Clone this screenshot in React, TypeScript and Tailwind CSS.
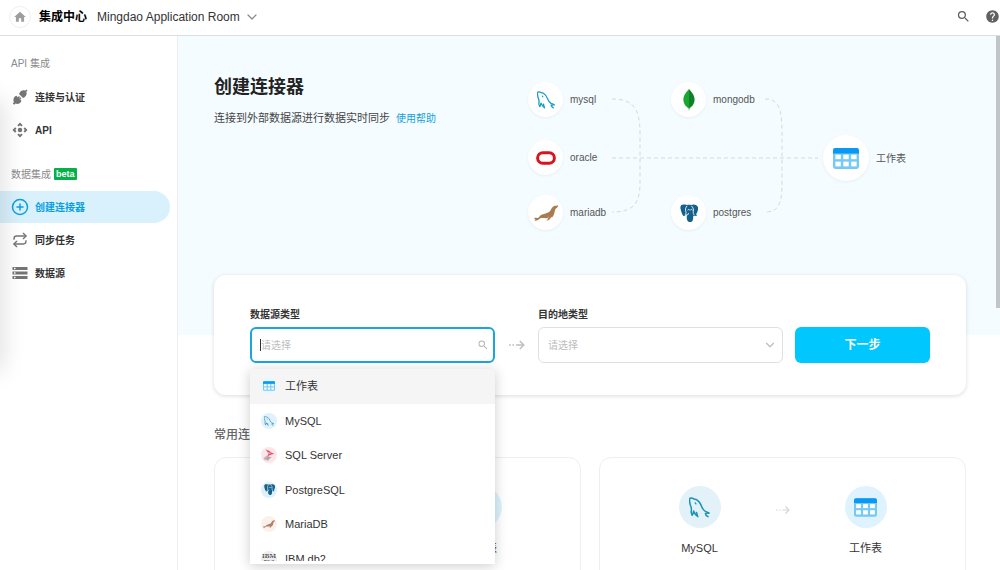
import type { ReactNode } from 'react'
import { MdControlCamera, MdHelp, MdHome, MdSearch, MdStorage } from 'react-icons/md'
import { SiMariadb } from 'react-icons/si'
import { ChevronDown, CirclePlus, Repeat } from 'lucide-react'

interface NavItem {
  label: string
  icon: ReactNode
  active?: boolean
}

interface SourceOption {
  label: string
  icon: ReactNode
  tint: string
}

interface DiagramNode {
  label: string
  icon: ReactNode
  position: string
  large?: boolean
}

function TableIcon({ className }: { className: string }) {
  return (
    <svg viewBox="0 0 26 21" className={className} aria-hidden="true">
      <rect width="26" height="21" rx="2.4" fill="#74c9f5" />
      <path d="M0 5.4V2.4A2.4 2.4 0 0 1 2.4 0h21.2A2.4 2.4 0 0 1 26 2.4v3z" fill="#0a99f2" />
      <g fill="#fff">
        <rect x="2.4" y="6.6" width="5.4" height="4.6" />
        <rect x="10.3" y="6.6" width="5.4" height="4.6" />
        <rect x="18.2" y="6.6" width="5.4" height="4.6" />
        <rect x="2.4" y="13.6" width="5.4" height="4.8" />
        <rect x="10.3" y="13.6" width="5.4" height="4.8" />
        <rect x="18.2" y="13.6" width="5.4" height="4.8" />
      </g>
    </svg>
  )
}

function DolphinIcon({ className }: { className: string }) {
  return (
    <svg
      viewBox="0 0 64 64"
      className={className}
      fill="none"
      stroke="currentColor"
      strokeWidth="4.6"
      strokeLinecap="round"
      strokeLinejoin="round"
      aria-hidden="true"
    >
      <path d="M10 55c-3-4-4-8-3-13 1-6 0-11-2-15C3 21 1 12 2 6c1-5 8-3 13 0 3 1 6 1 9 3 8 5 12 13 15 21 3 7 6 11 11 14 4 2 8 3 11 5" />
      <path d="M10 55c2-3 3-7 4-12 3 7 6 13 13 17-2-5-3-9-4-13" />
      <path d="M60 49c-4 0-8 0-10 1 0 4 3 7 8 10" />
      <path d="M19 18l2 3" strokeWidth="4" />
    </svg>
  )
}

function ElephantIcon({ className }: { className: string }) {
  return (
    <svg viewBox="0 0 34 34" className={className} aria-hidden="true">
      <path
        d="M7 1C2 1 0 4 1 9c1 5 3 11 5 13 2 2 4 0 5-2l2 1c0 4-1 7 1 10 2 4 8 4 10 0 1-3 1-6 1-9 3 1 6 1 8-1l-3-1c3-4 5-10 4-14-2-5-8-6-13-4-3-1-6-1-8 0-2-1-4-1-6-1z"
        fill="#14618c"
      />
      <g fill="none" stroke="#fff" strokeWidth="1.7" strokeLinecap="round">
        <path d="M13 4c-3 3-3 7-2 10 1 3 0 5-1 6" />
        <path d="M22 4c3 3 4 6 3 10 0 3 0 5 2 7" />
        <path d="M15 11c1-1 3-1 3 0M20 11c1-1 2-1 3 0" />
        <path d="M13 20c2 1 3 0 3-2" />
      </g>
    </svg>
  )
}

function SqlServerIcon({ className }: { className: string }) {
  return (
    <svg viewBox="0 0 24 24" className={className} aria-hidden="true">
      <path d="M5 1c4 1 9 3 13 7 2 1 4 1 5 2-6 0-10 2-14 5 1-3 2-5 1-7C9 5 7 3 5 1z" fill="#e2445c" />
      <path d="M10 6l8 2-8 3z" fill="#f4a0ac" />
      <path d="M9 13c-4 1-7 3-8 6 0 3 5 4 9 4l8-7c-3 0-6-1-9-3z" fill="#c9bcc4" />
      <path d="M4 19c3 1 6 1 9 0M7 16c3 1 5 1 8 1M9 13l1 10" stroke="#9c8c96" strokeWidth="1" fill="none" />
    </svg>
  )
}

function OracleIcon() {
  return (
    <svg viewBox="0 0 20 14" className="h-3.5 w-5" aria-hidden="true">
      <rect x="1.6" y="1.8" width="16.8" height="10.4" rx="5.2" fill="none" stroke="#d9151c" strokeWidth="3" />
    </svg>
  )
}

function LeafIcon() {
  return (
    <svg viewBox="0 0 12 22" className="h-[22px] w-3" aria-hidden="true">
      <path d="M6 0C8.500 3 11.600 6 11.600 10.500 11.600 15 9 17.700 6.500 19.200L6 22z" fill="#12802a" />
      <path d="M6 0C3.500 3 .4 6 .4 10.500.4 15 3 17.700 5.500 19.200L6 22z" fill="#17a92f" />
    </svg>
  )
}

function PlugIcon() {
  return (
    <svg viewBox="0 0 24 24" className="size-4" fill="currentColor" aria-hidden="true">
      <path d="M10.500 7.500l6 6 2.300-1.200c2.900-1.800 3.800-5 2.700-8L23.300 2.500 21.500.7l-1.800 1.800c-3-1.100-6.200-.2-8 2.700z" />
      <path d="M4.300 11.200l2.200-1.200 2.200 2.200 1.800-1.800 1.500 1.500-1.800 1.800 0.600 0.600 1.800-1.800 1.500 1.500-1.800 1.800 1.900 1.900-1.200 2.300c-1.800 2.500-5 3-7.800 1.800L3.400 23.500 1.200 21.700l1.700-2c-1.300-3-1-6.300 1.400-8.500z" />
    </svg>
  )
}

function IbmIcon() {
  return (
    <svg viewBox="0 0 16 16" className="size-4" aria-hidden="true">
      <g fill="#4b4b4b" fontFamily="Liberation Serif, serif" fontWeight="700" textAnchor="middle">
        <text x="8" y="7" fontSize="7">IBM</text>
        <text x="8" y="13" fontSize="6">Db2</text>
      </g>
      <path d="M1 4.500h14" stroke="#ededed" strokeWidth=".4" />
    </svg>
  )
}

function DottedArrow({ className }: { className: string }) {
  return (
    <svg viewBox="0 0 16 10" className={className} fill="none" stroke="currentColor" strokeWidth="1.4" aria-hidden="true">
      <path d="M0 5h1.700M3.400 5h1.700M7 5h8" />
      <path d="M10.800 1l4 4-4 4" />
    </svg>
  )
}

const apiNav: NavItem[] = [
  { label: '连接与认证', icon: <PlugIcon /> },
  { label: 'API', icon: <MdControlCamera className="size-[18px] shrink-0" /> },
]

const dataNav: NavItem[] = [
  { label: '创建连接器', icon: <CirclePlus className="size-[18px] shrink-0" />, active: true },
  { label: '同步任务', icon: <Repeat className="size-4" /> },
  { label: '数据源', icon: <MdStorage className="size-[18px] shrink-0" /> },
]

const options: SourceOption[] = [
  { label: '工作表', icon: <TableIcon className="h-2.5 w-3" />, tint: 'bg-[#e6f7ff]' },
  { label: 'MySQL', icon: <DolphinIcon className="size-2.5 text-[#2f8fb0]" />, tint: 'bg-[#dff2fb]' },
  { label: 'SQL Server', icon: <SqlServerIcon className="size-3" />, tint: 'bg-[#fde6ea]' },
  { label: 'PostgreSQL', icon: <ElephantIcon className="size-[11px]" />, tint: 'bg-[#dff0fb]' },
  { label: 'MariaDB', icon: <SiMariadb className="size-3 text-[#a9806a]" />, tint: 'bg-[#fbf0ec]' },
  { label: 'IBM db2', icon: <IbmIcon />, tint: 'bg-[#ededed]' },
]

const nodes: DiagramNode[] = [
  { label: 'mysql', icon: <DolphinIcon className="size-[18px] text-[#1b9cc4]" />, position: 'left-0 top-[8px]' },
  { label: 'oracle', icon: <OracleIcon />, position: 'left-0 top-[66px]' },
  { label: 'mariadb', icon: <SiMariadb className="size-6 text-[#a87c50]" />, position: 'left-0 top-[121px]' },
  { label: 'mongodb', icon: <LeafIcon />, position: 'left-[143px] top-[8px]' },
  { label: 'postgres', icon: <ElephantIcon className="size-[18px]" />, position: 'left-[143px] top-[121px]' },
  { label: '工作表', icon: <TableIcon className="h-[21px] w-[26px]" />, position: 'left-[295px] top-[61px]', large: true },
]

function NavSection({ items }: { items: NavItem[] }) {
  return (
    <ul className="mt-[7px] flex flex-col gap-px">
      {items.map((item) => (
        <li key={item.label}>
          <a
            href="#"
            className={`mr-[7px] flex h-8 items-center gap-[7px] rounded-r-full pl-3 font-bold ${
              item.active ? 'bg-[#d9f1fd] text-[#0c9fe0]' : 'text-[#333]'
            }`}
          >
            <span className={`flex w-4 justify-center ${item.active ? 'text-[#0c9fe0]' : 'text-[#757575]'}`}>{item.icon}</span>
            {item.label}
          </a>
        </li>
      ))}
    </ul>
  )
}

function Header() {
  return (
    <header className="relative z-20 flex h-9 shrink-0 items-center border-b border-[#dcdfe0] bg-white pb-0.5 pl-[9px] text-xs">
      <button aria-label="Home" className="flex size-[22px] items-center justify-center rounded-full border border-[#f0f0f0] text-[#9e9e9e]">
        <MdHome className="size-3.5" />
      </button>
      <h1 className="ml-2 font-bold text-black">集成中心</h1>
      <button className="ml-[10px] flex items-center gap-1 text-[#333]">
        Mingdao Application Room
        <ChevronDown className="size-4 text-[#888]" strokeWidth={1.8} />
      </button>
      <div className="ml-auto flex gap-[14px] text-[#616161]">
        <button aria-label="Search">
          <MdSearch className="size-[15px]" />
        </button>
        <button aria-label="Help">
          <MdHelp className="size-[15px]" />
        </button>
      </div>
    </header>
  )
}

function Sidebar() {
  return (
    <nav className="relative w-[178px] shrink-0 border-r border-[#eceff1] bg-white pt-[18px]">
      <h2 className="h-5 pl-[11px] leading-5 text-[#8a8a8a]">API 集成</h2>
      <NavSection items={apiNav} />
      <h2 className="mt-[18px] flex h-5 items-center gap-[3px] pl-[11px] text-[#8a8a8a]">
        数据集成
        <span className="rounded-[1px] bg-[#05b048] px-0.5 text-[9px] leading-3 font-bold text-white">beta</span>
      </h2>
      <NavSection items={dataNav} />
      <div className="absolute top-16 -left-4 h-[270px] w-4 shadow-[0_0_24px_rgba(0,0,0,0.18)]" />
    </nav>
  )
}

function Diagram() {
  return (
    <div className="relative mr-14 h-40 w-[382px] shrink-0 text-[#555]">
      <svg viewBox="0 0 382 160" className="absolute inset-0" fill="none" stroke="#d3dadd" strokeWidth="1" strokeDasharray="4 3" aria-hidden="true">
        <path d="M84 25c20 0 28 8 28 34v50c0 22-8 29-28 29" />
        <path d="M237 25c13 0 17 8 17 34v50c0 22-4 29-17 29" />
        <path d="M84 84h206" />
      </svg>
      {nodes.map((node) => (
        <div key={node.label} className={`absolute flex items-center gap-[7px] ${node.position}`}>
          <span
            className={`flex items-center justify-center rounded-full bg-white shadow-[0_1px_3px_rgba(0,0,0,0.06)] ${
              node.large ? 'size-[46px]' : 'size-[35px]'
            }`}
          >
            {node.icon}
          </span>
          {node.label}
        </div>
      ))}
    </div>
  )
}

function SourceSelect() {
  return (
    <div className="relative flex-1">
      <label htmlFor="source" className="block leading-4 font-bold text-[#333]">
        数据源类型
      </label>
      <div className="mt-1 flex h-9 items-center rounded-md border-2 border-[#1ba5dc] bg-white pr-1 pl-2">
        <span className="h-3 w-px bg-[#333]" />
        <input
          id="source"
          role="combobox"
          aria-expanded="true"
          aria-controls="source-options"
          placeholder="请选择"
          className="min-w-0 flex-1 outline-none placeholder:text-[#bdbdbd]"
        />
        <MdSearch className="size-3 text-[#b5b5b5]" />
      </div>
      <div className="absolute inset-x-0 top-[62px] z-10 bg-white pb-[3px] shadow-[0_2px_12px_rgba(0,0,0,0.2)]">
        <div className="h-48 overflow-hidden">
          <ul id="source-options" role="listbox" className="grid h-[207px] auto-rows-fr text-[11px] text-[#333]">
            {options.map((option, i) => (
              <li
                key={option.label}
                role="option"
                aria-selected={i === 0}
                className={`flex items-center gap-2 pl-[11px] ${i === 0 ? 'bg-[#f5f5f5]' : ''}`}
              >
                <span className={`flex size-4 items-center justify-center rounded-full ${option.tint}`}>{option.icon}</span>
                {option.label}
              </li>
            ))}
          </ul>
        </div>
      </div>
    </div>
  )
}

function ConnectorForm() {
  return (
    <form className="-mt-15 flex items-end rounded-xl bg-white px-9 py-8 shadow-[0_1px_4px_rgba(0,0,0,0.14)]">
      <SourceSelect />
      <div className="flex h-9 w-[43px] items-center justify-center">
        <DottedArrow className="h-2.5 w-4 text-[#bdbdbd]" />
      </div>
      <div className="flex-1">
        <label htmlFor="target" className="block leading-4 font-bold text-[#333]">
          目的地类型
        </label>
        <div className="relative mt-1">
          <select
            id="target"
            defaultValue=""
            className="block h-9 w-full appearance-none rounded-md border border-[#e0e0e0] bg-white px-[9px] text-[#bdbdbd]"
          >
            <option value="">请选择</option>
          </select>
          <ChevronDown className="pointer-events-none absolute top-[11px] right-1.5 size-3.5 text-[#bdbdbd]" />
        </div>
      </div>
      <button type="button" className="ml-3 h-9 w-[135px] rounded-md bg-[#00c8ff] text-xs font-bold text-white">
        下一步
      </button>
    </form>
  )
}

function PresetEnd({ label, tint, children }: { label: string; tint: string; children: ReactNode }) {
  return (
    <div className="flex w-16 flex-col items-center gap-3">
      <span className={`flex size-[42px] items-center justify-center rounded-full ${tint}`}>{children}</span>
      <span className="leading-4">{label}</span>
    </div>
  )
}

function PresetCard({ source, tint, icon }: { source: string; tint: string; icon: ReactNode }) {
  return (
    <div className="flex justify-center gap-11 rounded-xl border border-[#efefef] bg-white pt-7 pb-10 text-[11px] text-[#333]">
      <PresetEnd label={source} tint={tint}>
        {icon}
      </PresetEnd>
      <DottedArrow className="mt-[19px] h-2.5 w-3.5 text-[#d5d5d5]" />
      <PresetEnd label="工作表" tint="bg-[#def3fd]">
        <TableIcon className="h-[19px] w-[23px]" />
      </PresetEnd>
    </div>
  )
}

export default function App() {
  return (
    <div className="flex h-screen flex-col overflow-hidden bg-white font-['Liberation_Sans','Noto_Sans_CJK_SC',sans-serif] text-[10px]">
      <Header />
      <div className="flex min-h-0 flex-1">
        <Sidebar />
        <main className="relative flex-1 overflow-hidden">
          <section className="flex justify-between bg-[#f4fcff] pt-[38px] pr-[34px] pb-[101px] pl-9">
            <div>
              <h2 className="text-lg leading-[26px] font-bold text-[#222]">创建连接器</h2>
              <p className="mt-2 text-[11px] leading-5 text-[#444]">
                连接到外部数据源进行数据实时同步
                <a href="#" className="ml-1.5 text-[10px] text-[#14a0dc]">
                  使用帮助
                </a>
              </p>
            </div>
            <Diagram />
          </section>
          <div className="pr-[34px] pl-9">
            <ConnectorForm />
            <h3 className="mt-[30px] h-5 text-xs leading-5 font-medium text-[#666]">常用连接</h3>
            <div className="mt-3 grid grid-cols-2 gap-[18px]">
              <PresetCard source="SQL Server" tint="bg-[#fde6ea]" icon={<SqlServerIcon className="size-6" />} />
              <PresetCard source="MySQL" tint="bg-[#e3f2f8]" icon={<DolphinIcon className="size-[21px] text-[#1b93b5]" />} />
            </div>
          </div>
          <div className="absolute top-0 right-0 h-[272px] w-1 bg-[#c1c5c7]" />
        </main>
      </div>
    </div>
  )
}
